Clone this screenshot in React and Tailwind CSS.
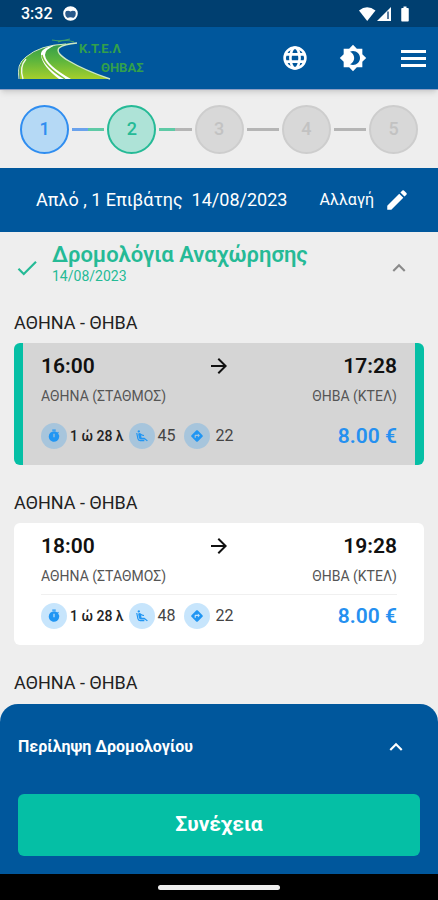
import { useState } from 'react';
import {
  MdAirlineSeatReclineExtra,
  MdArrowForward,
  MdBatteryFull,
  MdBrightness4,
  MdCheck,
  MdDirections,
  MdEdit,
  MdKeyboardArrowUp,
  MdTimer,
} from 'react-icons/md';

const steps = [
  { id: 1, circle: 'border-[#2f8df0] bg-[#b5d9f5] text-[#2f8df0]', line: 'bg-linear-to-r from-50% from-[#6aa2ec] to-50% to-[#5fcaa6]' },
  { id: 2, circle: 'border-[#25ba96] bg-[#aee3d7] text-[#25ba96]', line: 'bg-linear-to-r from-50% from-[#5fcaa6] to-50% to-[#b5b5b5]' },
  { id: 3, circle: 'border-[#cdcdcd] bg-[#d8d8d8] text-[#c2c2c2]', line: 'bg-[#b5b5b5]' },
  { id: 4, circle: 'border-[#cdcdcd] bg-[#d8d8d8] text-[#c2c2c2]', line: 'bg-[#b5b5b5]' },
  { id: 5, circle: 'border-[#cdcdcd] bg-[#d8d8d8] text-[#c2c2c2]' },
];

const routes = [
  { id: 1, departure: '16:00', arrival: '17:28', duration: '1 ώ 28 λ', seats: 45, stops: 22, price: '8.00 €' },
  { id: 2, departure: '18:00', arrival: '19:28', duration: '1 ώ 28 λ', seats: 48, stops: 22, price: '8.00 €' },
];

function StatusBar() {
  return (
    <div className="flex h-[27px] items-center justify-between bg-[#003f70] pr-[28px] pl-[21px] text-white">
      <div className="flex items-center gap-2.5">
        <span className="text-base font-medium">3:32</span>
        <svg width="15" height="15" viewBox="0 0 15 15" aria-hidden="true">
          <circle cx="7.5" cy="7.5" r="6.3" fill="#29598a" stroke="#fff" strokeWidth="2" />
          <path d="M1.5 6 Q2 1 7.5 1 Q13 1 13.5 6 Q10 4 7.5 5.5 Q5 4 1.5 6z" fill="#fff" />
          <path d="M4.5 12 Q7.5 10.5 10.5 12 Q9.5 14 7.5 14 Q5.5 14 4.5 12z" fill="#fff" />
        </svg>
      </div>
      <div className="flex items-center">
        <svg width="38" height="16" viewBox="0 0 38 16" aria-hidden="true">
          <path d="M1 4.5 Q9 -2 17.5 4.5 L9.2 15z" fill="#fff" />
          <path d="M33 1 V15 H19z" fill="#fff" />
          <path d="M30 5.5 V13" stroke="#24507f" strokeWidth="1.5" />
        </svg>
        <MdBatteryFull size={18} className="-mr-1" />
      </div>
    </div>
  );
}

function Logo() {
  return (
    <svg width="132" height="46" viewBox="0 0 132 46" role="img" aria-label="Κ.Τ.Ε.Λ Θήβας">
      <defs>
        <linearGradient id="road" x1="0" y1="0" x2="0" y2="1">
          <stop offset="0" stopColor="#2f9b4b" />
          <stop offset="0.5" stopColor="#5fb63c" />
          <stop offset="1" stopColor="#a6cf2c" />
        </linearGradient>
      </defs>
      <path d="M34 5 Q43 7 52 4 M40 7 Q48 4 56 7" fill="none" stroke="#3f9f6a" strokeWidth="1.2" />
      <path
        d="M59 8 Q26 8 8 22 Q-1 29 2 44 H92 Q66 35 51 26 Q37 18 41 13 Q46 9 59 8z"
        fill="url(#road)"
      />
      <path d="M1 44 Q-2 29 8 22 Q22 10 48 9" fill="none" stroke="#cfe8c4" strokeWidth="1" />
      <path d="M5 44 Q1 32 8 24" fill="none" stroke="#f2f8e6" strokeWidth="1.4" />
      <path d="M92 44 Q66 35 51 26 Q37 18 41 13 Q46 9 59 8" fill="none" stroke="#cfe8c4" strokeWidth="1.4" />
      <path d="M38 10 Q22 13 23 20 Q24 31 41 44 H53 Q28 30 27 20 Q27 14 38 10z" fill="#fff" />
      <path d="M24 20 Q26 31 47 44" fill="none" stroke="#7fc035" strokeWidth="1.4" />
      <text x="61" y="18" fill="#32a04b" fontSize="13" fontWeight="700" fontFamily="'Roboto', sans-serif">
        Κ.Τ.Ε.Λ
      </text>
      <text x="83" y="37" fill="#32a04b" fontSize="13" fontWeight="700" fontFamily="'Roboto', sans-serif">
        ΘΗΒΑΣ
      </text>
    </svg>
  );
}

function GlobeIcon() {
  return (
    <svg width="28" height="28" viewBox="0 0 28 28" fill="none" stroke="currentColor" strokeWidth="2.6" aria-hidden="true">
      <circle cx="14" cy="14" r="10.4" />
      <ellipse cx="14" cy="14" rx="4.6" ry="10.4" />
      <path d="M4.5 10.4 H23.5 M4.5 17.6 H23.5" />
    </svg>
  );
}

function MenuIcon() {
  return (
    <svg width="33" height="33" viewBox="0 0 33 33" stroke="currentColor" strokeWidth="3" aria-hidden="true">
      <path d="M4 9.5 H29 M4 16.5 H29 M4 23.5 H29" />
    </svg>
  );
}

function Badge({ icon: Icon }) {
  return (
    <span className="flex size-[26px] shrink-0 items-center justify-center rounded-full bg-[#2196f3]/25 text-[#2196f3]">
      <Icon size={14} />
    </span>
  );
}

function RouteCard({ route, selected, onSelect }) {
  return (
    <button
      type="button"
      aria-pressed={selected}
      onClick={onSelect}
      className={
        'block w-full rounded-md border-x-[9px] px-[18px] pt-[9px] pb-4 text-left ' +
        (selected ? 'border-[#05bfa5] bg-[#d5d5d5]' : 'border-white bg-white')
      }>
      <span className="grid grid-cols-[1fr_auto_1fr] items-center text-[21px] leading-7 font-semibold text-[#111]">
        <span>{route.departure}</span>
        <MdArrowForward size={24} />
        <span className="text-right">{route.arrival}</span>
      </span>
      <span className="mt-1.5 flex justify-between text-sm leading-5 text-[#555]">
        <span>ΑΘΗΝΑ (ΣΤΑΘΜΟΣ)</span>
        <span>ΘΗΒΑ (ΚΤΕΛ)</span>
      </span>
      <span className={'mt-2 block h-px ' + (selected ? 'bg-[#d5d5d5]' : 'bg-[#f0f0f0]')} />
      <span className="flex items-center justify-between pt-2">
        <span className="flex items-center text-base text-[#444]">
          <Badge icon={MdTimer} />
          <span className="mr-[5px] ml-[3px] text-sm font-medium text-[#222]">{route.duration}</span>
          <Badge icon={MdAirlineSeatReclineExtra} />
          <span className="mr-2 ml-[3px]">{route.seats}</span>
          <Badge icon={MdDirections} />
          <span className="ml-1.5">{route.stops}</span>
        </span>
        <span className="text-[21px] leading-[26px] font-semibold text-[#2590f0]">{route.price}</span>
      </span>
    </button>
  );
}

export default function App() {
  const [selected, setSelected] = useState(1);

  return (
    <div className="flex min-h-screen flex-col bg-[#eee] font-['Roboto',sans-serif]">
      <StatusBar />
      <header className="z-10 flex h-[63px] items-center justify-between border-b border-[#8d9fc4] bg-[#00579c] pr-2 pl-[18px] text-white shadow-md">
        <Logo />
        <div className="flex items-center gap-[30px]">
          <button type="button" aria-label="Γλώσσα">
            <GlobeIcon />
          </button>
          <button type="button" aria-label="Θέμα">
            <MdBrightness4 size={28} />
          </button>
          <button type="button" aria-label="Μενού">
            <MenuIcon />
          </button>
        </div>
      </header>

      <ol className="flex h-[78px] items-center px-5">
        {steps.map((step) => (
          <li key={step.id} className={step.line ? 'flex flex-1 items-center' : 'flex items-center'}>
            <span className={`flex size-[49px] shrink-0 items-center justify-center rounded-full border-2 text-lg font-medium ${step.circle}`}>
              {step.id}
            </span>
            {step.line && <span className={`mx-[3px] h-[3px] flex-1 ${step.line}`} />}
          </li>
        ))}
      </ol>

      <div className="flex h-16 items-center justify-between bg-[#00579c] pr-7 pl-9 text-white">
        <span className="text-lg whitespace-pre">Απλό , 1 Επιβάτης  14/08/2023</span>
        <button type="button" className="flex items-center gap-2.5 text-base">
          Αλλαγή
          <MdEdit size={26} />
        </button>
      </div>

      <main className="flex-1 px-3.5">
        <div className="mt-2.5 flex h-[52px] items-center pr-3">
          <MdCheck size={26} className="mr-3 text-[#25ba96]" />
          <div className="flex-1 self-start text-[#25ba96]">
            <h1 className="text-[22px] leading-[26px] font-semibold">Δρομολόγια Αναχώρησης</h1>
            <p className="text-sm leading-4">14/08/2023</p>
          </div>
          <button type="button" aria-label="Σύμπτυξη" className="text-[#8a8a8a]">
            <MdKeyboardArrowUp size={26} />
          </button>
        </div>

        <div className="flex flex-col gap-[26px] pt-[17px] text-[#222]">
          {routes.map((route) => (
            <section key={route.id}>
              <h2 className="mb-2 text-lg leading-6">ΑΘΗΝΑ - ΘΗΒΑ</h2>
              <RouteCard
                route={route}
                selected={selected === route.id}
                onSelect={() => setSelected(route.id)}
              />
            </section>
          ))}
          <h2 className="text-lg leading-6">ΑΘΗΝΑ - ΘΗΒΑ</h2>
        </div>
      </main>

      <footer className="rounded-t-[18px] bg-[#00579c] px-[18px] pb-[18px] text-white">
        <button type="button" className="flex h-[90px] w-full items-center justify-between pr-[11px] pb-1 text-base font-bold">
          Περίληψη Δρομολογίου
          <MdKeyboardArrowUp size={26} stroke="currentColor" />
        </button>
        <button type="button" className="h-[62px] w-full rounded-md bg-[#05bfa5] text-[21px] font-bold">
          Συνέχεια
        </button>
      </footer>
      <div className="flex h-[26px] items-center justify-center bg-black">
        <span className="h-[5px] w-[122px] rounded-full bg-[#eee]" />
      </div>
    </div>
  );
}
